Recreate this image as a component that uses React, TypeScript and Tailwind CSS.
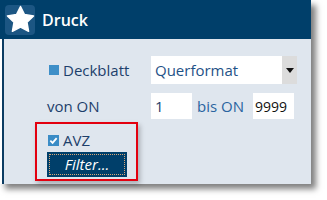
function App() {
    return (
        <div className="w-[327px] h-[200px] bg-white font-['Open_Sans',sans-serif]">
            <div className="w-[311px] h-[184px] flex flex-col shadow-[5px_5px_6px_rgba(0,0,0,0.5)]">
                {/* header */}
                <div className="h-[39px] bg-[#003f6a] flex items-center pl-[5px] gap-[7px]">
                    <div className="w-[30px] h-[30px] rounded-[4px] bg-[#1c5683] flex items-center justify-center">
                        <svg width="29" height="29" viewBox="0 0 24 24">
                            <polygon
                                points="12,1.2 15.3,7.9 22.8,9 17.4,14.3 18.7,21.8 12,18.3 5.3,21.8 6.6,14.3 1.2,9 8.7,7.9"
                                fill="white"
                                stroke="white"
                                strokeWidth="1.2"
                                strokeLinejoin="round"
                            />
                        </svg>
                    </div>
                    <span className="text-[16px] font-semibold text-white leading-none">Druck</span>
                </div>

                {/* body */}
                <div className="flex-1 bg-white flex">
                    <div className="flex-1 ml-[2px] border-l-2 border-[#0b3c62] bg-[#dfe6ee] pl-[31px] pt-[17px] text-[15px] text-[#1d3f6b]">
                        <div className="flex items-center h-[28px] pl-[12px]">
                            <div className="w-[104px] flex items-center gap-[4px]">
                                <span className="ml-[2px] w-[10px] h-[10px] bg-[#3e8fc8]" />
                                <span>Deckblatt</span>
                            </div>
                            <div className="w-[146px] h-[28px] bg-white flex">
                                <span className="flex-1 pl-[4px] flex items-center text-[#1f5287]">Querformat</span>
                                <span className="w-[15px] bg-[#dcdcdc] flex items-center justify-center">
                                    <svg width="8" height="5" viewBox="0 0 8 5"><polygon points="0,0 8,0 4,5" fill="#111" /></svg>
                                </span>
                            </div>
                        </div>

                        <div className="flex items-center h-[26px] mt-[9px] pl-[12px]">
                            <span className="w-[104px]">von ON</span>
                            <span className="w-[41px] h-[26px] bg-white pl-[4px] flex items-center text-[#1d3f6b]">1</span>
                            <span className="ml-[5px] w-[56px] text-[#2a64a0]">bis ON</span>
                            <span className="w-[41px] h-[26px] bg-white pl-[2px] flex items-center text-[14px] text-[#111]">9999</span>
                        </div>

                        <div className="mt-[3px] w-[103px] h-[59px] border-2 border-[#e3000f] pl-[11px] pt-[8px] shadow-[2px_3px_5px_rgba(0,0,0,0.25)]">
                            <div className="flex items-center h-[16px] gap-[4px]">
                                <span className="w-[11px] h-[11px] bg-[#3a8cc6] flex items-center justify-center">
                                    <svg width="9" height="9" viewBox="0 0 10 10">
                                        <polyline points="1.5,5.2 4,7.6 8.5,2.4" fill="none" stroke="white" strokeWidth="2" />
                                    </svg>
                                </span>
                                <span>AVZ</span>
                            </div>
                            <div className="mt-[4px] -ml-[1px] w-[80px] h-[25px] bg-[#003f6a] p-[2px]">
                                <div className="w-full h-full border border-dotted border-[#d8a878] flex items-center justify-center italic text-white">
                                    Filter...
                                </div>
                            </div>
                        </div>
                    </div>
                </div>
            </div>
        </div>
    )
}

export default App
